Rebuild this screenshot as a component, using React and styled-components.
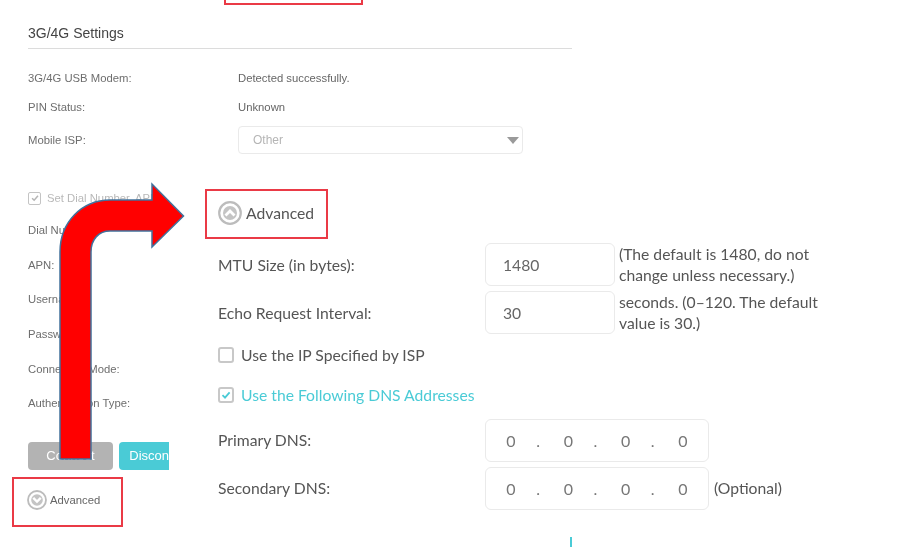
import React from 'react';
import styled, { createGlobalStyle } from 'styled-components';

const Global = createGlobalStyle`
  html, body { margin: 0; padding: 0; background: #fff; }
  * { box-sizing: border-box; }
`;

const Page = styled.div`
  position: relative;
  width: 900px;
  height: 547px;
  overflow: hidden;
  background: #fff;
  font-family: "Liberation Sans", Arial, sans-serif;
  color: #666;
  filter: blur(0.3px);
`;

const Settings = styled.section`
  width: 544px;
  height: 183px;
  margin-left: 28px;
  padding-top: 26px;
`;

const Title = styled.h2`
  margin: 0;
  height: 23px;
  border-bottom: 1px solid #dcdcdc;
  font-size: 14px;
  font-weight: 400;
  line-height: 15px;
  color: #444;
`;

const InfoRow = styled.div`
  display: flex;
  align-items: center;
  height: ${p => p.$h}px;
  margin-top: ${p => p.$mt || 0}px;
  font-size: 11.3px;
  white-space: nowrap;
`;

const InfoLabel = styled.span`
  width: 210px;
  flex: none;
  color: #6e6e6e;
`;

const SelectBox = styled.div`
  display: flex;
  align-items: center;
  justify-content: space-between;
  width: 285px;
  height: 28px;
  padding: 0 3px 0 14px;
  border: 1px solid #eaeaea;
  border-radius: 4px;
  font-size: 12px;
  color: #b5b5b5;
`;

const Caret = styled.span`
  width: 0;
  height: 0;
  border-left: 6px solid transparent;
  border-right: 6px solid transparent;
  border-top: 7px solid #9a9a9a;
`;

const Columns = styled.div`
  display: flex;
  align-items: flex-start;
`;

const LeftColumn = styled.div`
  width: 169px;
  height: 364px;
  padding-left: 28px;
  overflow: hidden;
  flex: none;
  font-size: 11.3px;
  color: #6e6e6e;
`;

const CheckRow = styled.div`
  display: flex;
  align-items: center;
  gap: 6px;
  height: 30px;
  white-space: nowrap;
  color: #b9b9b9;
`;

const SmallCheck = styled.span`
  display: inline-flex;
  align-items: center;
  justify-content: center;
  width: 13px;
  height: 13px;
  border: 1px solid #c4c4c4;
  border-radius: 2px;
  flex: none;
`;

const LeftRow = styled.div`
  display: flex;
  align-items: center;
  height: 34.6px;
  white-space: nowrap;
`;

const Buttons = styled.div`
  display: flex;
  gap: 6px;
  margin-top: 21.4px;
  width: 180px;
`;

const Button = styled.div`
  flex: none;
  display: flex;
  align-items: center;
  justify-content: center;
  width: 85px;
  height: 28px;
  border-radius: 4px;
  background: ${p => p.$teal ? '#4acbd6' : '#b3b3b3'};
  color: #fff;
  font-size: 13px;
  white-space: nowrap;
`;

const AdvancedSmall = styled.div`
  display: flex;
  align-items: center;
  gap: 3px;
  height: 20px;
  margin-top: 20px;
  margin-left: -1px;
  color: #666;
`;

const RightColumn = styled.div`
  margin-left: 49px;
  padding-top: 12px;
  font-family: Lato, "Noto Sans", sans-serif;
  font-size: 15.7px;
  color: #555;
`;

const AdvancedLarge = styled.div`
  display: flex;
  align-items: center;
  gap: 4px;
  height: 36px;
  margin-bottom: 12px;
`;

const FieldRow = styled.div`
  display: flex;
  align-items: center;
  height: 43px;
  margin-bottom: 5px;
`;

const FieldLabel = styled.label`
  width: 267px;
  flex: none;
`;

const TextInput = styled.div`
  display: flex;
  align-items: center;
  width: 130px;
  height: 43px;
  padding-left: 17px;
  border: 1px solid #eaeaea;
  border-radius: 6px;
  color: #666;
  flex: none;
`;

const Note = styled.div`
  width: 215px;
  margin-left: 4px;
  line-height: 21px;
  margin-top: 1px;
`;

const Options = styled.div`
  margin-top: -4px;
  margin-bottom: 4px;
`;

const OptionRow = styled.div`
  display: flex;
  align-items: center;
  gap: 7px;
  height: 40px;
  color: ${p => p.$active ? '#4acbd6' : '#555'};
`;

const Check = styled.span`
  display: inline-flex;
  align-items: center;
  justify-content: center;
  width: 16px;
  height: 16px;
  border: 2px solid #c8c8c8;
  border-radius: 3px;
  flex: none;
`;

const IpInput = styled.div`
  display: flex;
  align-items: center;
  width: 224px;
  height: 43px;
  padding-left: 15px;
  border: 1px solid #eaeaea;
  border-radius: 6px;
  flex: none;
  font-size: 16px;
  color: #777;
`;

const DnsLabel = styled(FieldLabel)`
  margin-top: -2px;
`;

const Octet = styled.span`
  width: 20px;
  text-align: center;
`;

const Dot = styled.span`
  width: 37.3px;
  padding-right: 3px;
  text-align: center;
`;

const Optional = styled.span`
  margin: -2px 0 0 5px;
`;

const Tick = styled.div`
  width: 2px;
  height: 10px;
  margin: 27px 0 0 352px;
  background: #4acbd6;
`;

const Highlight = styled.div`
  position: absolute;
  left: ${p => p.$x}px;
  top: ${p => p.$y}px;
  width: ${p => p.$w}px;
  height: ${p => p.$h}px;
  border: 2px solid #ea3a46;
  pointer-events: none;
`;

const ArrowSvg = styled.svg`
  position: absolute;
  left: 0;
  top: 0;
  pointer-events: none;
`;

const Round = ({ size, up }) => (
  <svg width={size} height={size} viewBox="0 0 24 24" style={{ flex: 'none' }}>
    <circle cx="12" cy="12" r="10.8" fill="#fff" stroke="#bcbcbc" strokeWidth="2.2" />
    <circle cx="12" cy="12" r="7" fill="#c4c4c4" />
    <path
      d={up ? 'M7.5 14.5 L12 10 L16.5 14.5' : 'M7.5 9.5 L12 14 L16.5 9.5'}
      fill="none"
      stroke="#fff"
      strokeWidth="2.8"
    />
  </svg>
);

const Tickmark = ({ color, size }) => (
  <svg width={size} height={size} viewBox="0 0 12 12">
    <path d="M2.5 6.2 L5 8.6 L9.6 3.4" fill="none" stroke={color} strokeWidth="1.8" />
  </svg>
);

const Ip = () => (
  <IpInput>
    <Octet>0</Octet><Dot>.</Dot><Octet>0</Octet><Dot>.</Dot><Octet>0</Octet><Dot>.</Dot><Octet>0</Octet>
  </IpInput>
);

export default function App() {
  return (
    <Page>
      <Global />
      <Settings>
        <Title>3G/4G Settings</Title>
        <InfoRow $h={29} $mt={14}>
          <InfoLabel>3G/4G USB Modem:</InfoLabel>
          <span>Detected successfully.</span>
        </InfoRow>
        <InfoRow $h={30}>
          <InfoLabel>PIN Status:</InfoLabel>
          <span>Unknown</span>
        </InfoRow>
        <InfoRow $h={36}>
          <InfoLabel>Mobile ISP:</InfoLabel>
          <SelectBox>Other<Caret /></SelectBox>
        </InfoRow>
      </Settings>
      <Columns>
        <LeftColumn>
          <CheckRow>
            <SmallCheck><Tickmark color="#b5b5b5" size={10} /></SmallCheck>
            Set Dial Number, APN,
          </CheckRow>
          <LeftRow>Dial Number:</LeftRow>
          <LeftRow>APN:</LeftRow>
          <LeftRow>Username:</LeftRow>
          <LeftRow>Password:</LeftRow>
          <LeftRow>Connection Mode:</LeftRow>
          <LeftRow>Authentication Type:</LeftRow>
          <Buttons>
            <Button>Connect</Button>
            <Button $teal>Disconnect</Button>
          </Buttons>
          <AdvancedSmall><Round size={20} />Advanced</AdvancedSmall>
        </LeftColumn>
        <RightColumn>
          <AdvancedLarge><Round size={24} up />Advanced</AdvancedLarge>
          <FieldRow>
            <FieldLabel>MTU Size (in bytes):</FieldLabel>
            <TextInput>1480</TextInput>
            <Note>(The default is 1480, do not change unless necessary.)</Note>
          </FieldRow>
          <FieldRow>
            <FieldLabel>Echo Request Interval:</FieldLabel>
            <TextInput>30</TextInput>
            <Note>seconds. (0–120. The default value is 30.)</Note>
          </FieldRow>
          <Options>
            <OptionRow><Check />Use the IP Specified by ISP</OptionRow>
            <OptionRow $active><Check><Tickmark color="#4acbd6" size={12} /></Check>Use the Following DNS Addresses</OptionRow>
          </Options>
          <FieldRow>
            <DnsLabel>Primary DNS:</DnsLabel>
            <Ip />
          </FieldRow>
          <FieldRow>
            <DnsLabel>Secondary DNS:</DnsLabel>
            <Ip />
            <Optional>(Optional)</Optional>
          </FieldRow>
          <Tick />
        </RightColumn>
      </Columns>
      <Highlight $x={224} $y={-10} $w={139} $h={15} />
      <Highlight $x={205} $y={189} $w={123} $h={50} />
      <Highlight $x={12} $y={477} $w={111} $h={50} />
      <ArrowSvg width="900" height="547" viewBox="0 0 900 547">
        <path d="M60 459 L60 252 C60 222 82 200 110 200 L152 200 L152 184 L183.5 216 L152 247 L152 231 L110 231 C99 231 91 239 91 252 L91 459 Z" fill="#ff0000" stroke="#41719c" strokeWidth="1.5" />
      </ArrowSvg>
    </Page>
  );
}
